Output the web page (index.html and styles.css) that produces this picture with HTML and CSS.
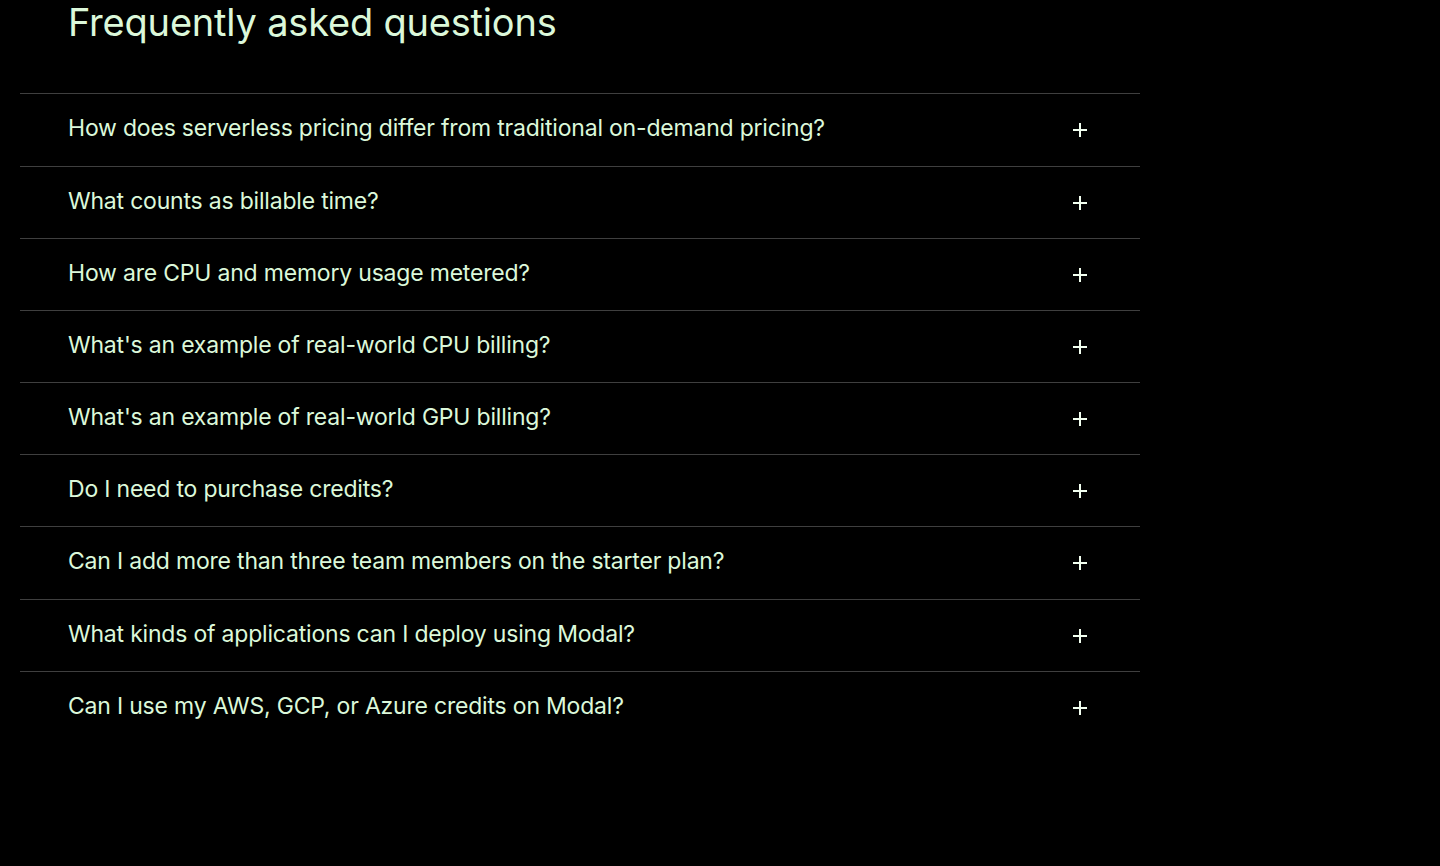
FILE: index.html
```html
<!DOCTYPE html>
<html lang="en">
<head>
  <meta charset="UTF-8"/>
  <meta name="viewport" content="width=device-width, initial-scale=1.0"/>
  <title>Pricing FAQ</title>
  <link rel="stylesheet" href="styles.css">
</head>
<body>
  <section class="faq">
    <h2 class="faq-title">Frequently asked questions</h2>
    <div class="faq-list">
      <button class="faq-item"><span>How does serverless pricing differ from traditional on-demand pricing?</span><svg class="plus" viewBox="0 0 16 16"><path d="M8 1v14M1 8h14"/></svg></button>
      <button class="faq-item"><span>What counts as billable time?</span><svg class="plus" viewBox="0 0 16 16"><path d="M8 1v14M1 8h14"/></svg></button>
      <button class="faq-item"><span>How are CPU and memory usage metered?</span><svg class="plus" viewBox="0 0 16 16"><path d="M8 1v14M1 8h14"/></svg></button>
      <button class="faq-item"><span>What's an example of real-world CPU billing?</span><svg class="plus" viewBox="0 0 16 16"><path d="M8 1v14M1 8h14"/></svg></button>
      <button class="faq-item"><span>What's an example of real-world GPU billing?</span><svg class="plus" viewBox="0 0 16 16"><path d="M8 1v14M1 8h14"/></svg></button>
      <button class="faq-item"><span>Do I need to purchase credits?</span><svg class="plus" viewBox="0 0 16 16"><path d="M8 1v14M1 8h14"/></svg></button>
      <button class="faq-item"><span>Can I add more than three team members on the starter plan?</span><svg class="plus" viewBox="0 0 16 16"><path d="M8 1v14M1 8h14"/></svg></button>
      <button class="faq-item"><span>What kinds of applications can I deploy using Modal?</span><svg class="plus" viewBox="0 0 16 16"><path d="M8 1v14M1 8h14"/></svg></button>
      <button class="faq-item"><span>Can I use my AWS, GCP, or Azure credits on Modal?</span><svg class="plus" viewBox="0 0 16 16"><path d="M8 1v14M1 8h14"/></svg></button>
    </div>
  </section>
</body>
</html>
```

FILE: styles.css
```css
:root {
  --bg: #000000;
  --text: #dcf8da;
  --line: #3f3f3f;
}

*, *::before, *::after { box-sizing: border-box; }

body {
  margin: 0;
  background: var(--bg);
  color: var(--text);
  font-family: 'Inter', 'Noto Sans', sans-serif;
  height: 866px;
  overflow: hidden;
}

.faq {
  width: 1120px;
  margin-left: 20px;
}

.faq-title {
  margin: 0;
  padding: 2px 0 0 48px;
  height: 93px;
  font-size: 38px;
  font-weight: 400;
  letter-spacing: -0.2px;
  line-height: 40px;
}

.faq-list {
  display: flex;
  flex-direction: column;
}

.faq-item {
  display: flex;
  align-items: center;
  justify-content: space-between;
  height: 72px;
  padding: 0 52px 0 48px;
  border: none;
  border-top: 1px solid var(--line);
  background: none;
  color: var(--text);
  font: 400 23px 'Inter', 'Noto Sans', sans-serif;
  letter-spacing: -0.2px;
  text-align: left;
  cursor: pointer;
}

.faq-item span { padding-bottom: 4px; }

.faq-item:first-child,
.faq-item:nth-child(7) { height: 73px; }

.plus {
  width: 16px;
  height: 16px;
  flex-shrink: 0;
  stroke: #f2fff0;
  stroke-width: 2;
  fill: none;
}
```
